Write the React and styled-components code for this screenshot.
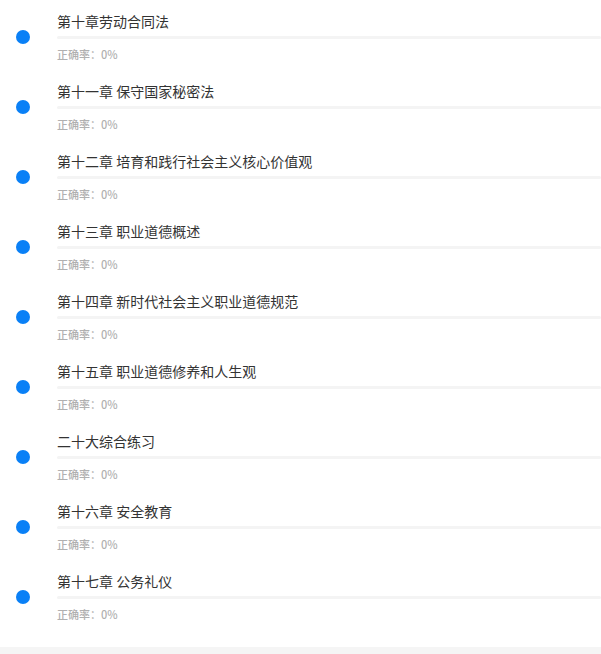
import styled, { createGlobalStyle } from "styled-components";

const GlobalStyle = createGlobalStyle`
  html, body {
    margin: 0;
    padding: 0;
    background: #f5f5f5;
    font-family: "Noto Sans CJK SC", "Noto Sans", sans-serif;
  }
`;

const List = styled.div`
  background: #ffffff;
  padding-bottom: 17px;
`;

const Row = styled.div`
  display: flex;
  align-items: center;
  height: 70px;
`;

const Dot = styled.div`
  width: 14px;
  height: 14px;
  border-radius: 50%;
  background: #0a80f6;
  margin: 3px 27px 0 16px;
  flex-shrink: 0;
`;

const Body = styled.div`
  flex: 1;
  display: flex;
  flex-direction: column;
  padding-top: 4px;
`;

const Title = styled.div`
  font-size: 14px;
  line-height: 16px;
  color: #333333;
  height: 16px;
`;

const Bar = styled.div`
  height: 3px;
  background: #f4f4f4;
  margin-top: 7px;
  border-radius: 2px;
`;

const Rate = styled.div`
  font-size: 11px;
  line-height: 14px;
  color: #b0b0b0;
  margin-top: 8px;
  font-weight: 500;
`;

const chapters = [
  "第十章劳动合同法",
  "第十一章 保守国家秘密法",
  "第十二章 培育和践行社会主义核心价值观",
  "第十三章 职业道德概述",
  "第十四章 新时代社会主义职业道德规范",
  "第十五章 职业道德修养和人生观",
  "二十大综合练习",
  "第十六章 安全教育",
  "第十七章 公务礼仪",
];

export default function App() {
  return (
    <>
      <GlobalStyle />
      <List>
        {chapters.map((c) => (
          <Row key={c}>
            <Dot />
            <Body>
              <Title>{c}</Title>
              <Bar />
              <Rate>正确率：0%</Rate>
            </Body>
          </Row>
        ))}
      </List>
    </>
  );
}
